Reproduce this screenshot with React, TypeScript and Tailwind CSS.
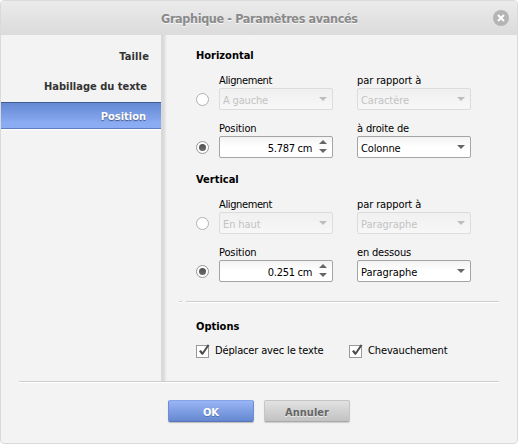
import type { ReactNode } from "react";

function Radio({ on = false }: { on?: boolean }) {
  return (
    <span className={`mt-[5px] mr-[10px] flex size-[13px] shrink-0 items-center justify-center rounded-full border bg-white ${on ? "border-[#969696]" : "border-[#b0b0b0]"}`}>
      {on && <span className="size-[7px] rounded-full bg-gradient-to-b from-[#505050] to-[#6c6c6c]" />}
    </span>
  );
}

function Select({ value, disabled = false }: { value: ReactNode; disabled?: boolean }) {
  return (
    <div
      className={`flex h-[22px] w-[114px] items-center justify-between rounded-[2px] border pl-[3px] pr-[5px] ${
        disabled ? "border-[#dcdcdc] bg-gradient-to-b from-[#f0f0f0] to-[#f7f7f7] text-[#c3c3c3]" : "border-[#a5a5a5] bg-gradient-to-b from-[#f3f3f3] to-white to-50% text-black"
      }`}
    >
      <span className="pt-[4px] leading-[16px]">{value}</span>
      <svg width="8" height="4" viewBox="0 0 8 4" className={disabled ? "fill-[#bdbdbd]" : "fill-[#666]"}>
        <path d="M0 0h8L4 4z" />
      </svg>
    </div>
  );
}

function Spinner({ value }: { value: ReactNode }) {
  return (
    <div className="flex h-[22px] w-[114px] items-center justify-end gap-[7px] rounded-[2px] border border-[#a5a5a5] bg-gradient-to-b from-[#f3f3f3] to-white to-50% pr-[5px]">
      <span className="pt-[4px] leading-[16px]">{value}</span>
      <svg width="8" height="14" viewBox="0 0 8 14" className="fill-[#666]">
        <path d="M0 4h8L4 0zM0 9h8L4 13z" />
      </svg>
    </div>
  );
}

function Row({ on, left, right, a, b }: { on?: boolean; left: ReactNode; right: ReactNode; a: ReactNode; b: ReactNode }) {
  return (
    <div className="flex h-[48px]">
      <div className="pt-[14px]">
        <Radio on={on} />
      </div>
      <div className="w-[138px]">
        <div className="h-[14px] leading-[14px]">{left}</div>
        {a}
      </div>
      <div>
        <div className="h-[14px] leading-[14px]">{right}</div>
        {b}
      </div>
    </div>
  );
}

function Check({ children }: { children: ReactNode }) {
  return (
    <div className="flex h-[15px] w-[153px] items-start gap-[5px]">
      <svg width="14" height="15" viewBox="0 0 14 15" fill="none" className="shrink-0">
        <rect x=".5" y="1.5" width="12" height="12" fill="#fff" stroke="#999" />
        <path d="M3 7.2 4.8 6 6.6 7.9 11.6.4 13.5 1.2 7 10.8H5.8z" fill="#4d4d4d" />
      </svg>
      <span className="leading-[13px]">{children}</span>
    </div>
  );
}

function T({ w = "", children }: { w?: string; children: string }) {
  return <span className={`inline-block whitespace-nowrap ${w}`}>{children}</span>;
}

const alignment = <T w="tracking-[-0.38px]">Alignement</T>;
const relativeTo = <T w="tracking-[-0.1px]">par rapport à</T>;
const position = <T w="tracking-[-0.13px]">Position</T>;
const paragraph = <T w="tracking-[-0.05px]">Paragraphe</T>;

export default function App() {
  return (
    <div className="h-[444px] w-[518px] overflow-hidden rounded-[4px] border border-[#dadada] bg-[#f3f3f3] font-['DejaVu_Sans_Condensed','DejaVu_Sans',sans-serif] text-[11px] [font-stretch:condensed] text-black">
      <header className="flex h-[34px] items-center bg-gradient-to-b from-[#ebebeb] to-[#dbdbdb] pl-[160px] pr-[8px] text-[12.5px] font-bold text-[#8a8a8a] [text-shadow:0_1px_0_#f8f8f8]">
        <span className="pt-[2px]"><T w="tracking-[-0.35px]">Graphique - Paramètres avancés</T></span>
        <svg width="16" height="16" viewBox="0 0 16 16" className="ml-auto">
          <circle cx="8" cy="8" r="8" fill="#b4b4b4" />
          <path d="m5 5 6 6m0-6-6 6" stroke="#fff" strokeWidth="2" />
        </svg>
      </header>
      <div className="flex h-[346px]">
        <nav className="flex w-[160px] flex-col text-right font-bold text-[#333]">
          <div className="h-[31px] pt-[15px] pr-[12px] leading-[14px]"><T w="tracking-[0.15px]">Taille</T></div>
          <div className="h-[36px] pt-[14px] pr-[14px] leading-[14px]"><T>Habillage du texte</T></div>
          <div className="h-[27px] border-y border-t-[#405b91] border-b-[#5f7fc2] bg-gradient-to-b from-[#6488d2] to-[#8babf3] to-80% pr-[15px] leading-[28px] text-white shadow-[0_1px_0_#fff] [text-shadow:0_1px_1px_#40557f]"><T>Position</T></div>
        </nav>
        <div className="w-[6px] bg-gradient-to-r from-[#d9d9d9] from-40% to-[#f3f3f3]" />
        <main className="flex flex-1 flex-col pl-[29px]">
          <h2 className="h-[39px] pt-[14px] font-bold leading-[14px]"><T>Horizontal</T></h2>
          <Row left={alignment} right={relativeTo} a={<Select disabled value={<T w="tracking-[-0.17px]">A gauche</T>} />} b={<Select disabled value={<T w="tracking-[-0.05px]">Caractère</T>} />} />
          <Row on left={position} right={<T w="tracking-[-0.15px]">à droite de</T>} a={<Spinner value={<T w="tracking-[-0.3px]">5.787 cm</T>} />} b={<Select value={<T w="tracking-[-0.13px]">Colonne</T>} />} />
          <h2 className="h-[28px] pt-[3px] font-bold leading-[14px]"><T>Vertical</T></h2>
          <Row left={alignment} right={relativeTo} a={<Select disabled value={<T w="tracking-[-0.1px]">En haut</T>} />} b={<Select disabled value={paragraph} />} />
          <Row on left={position} right={<T w="tracking-[-0.17px]">en dessous</T>} a={<Spinner value={<T w="tracking-[-0.3px]">0.251 cm</T>} />} b={<Select value={paragraph} />} />
          <div className="mt-[7px] -ml-[17px] flex w-[320px] gap-1">
            <div className="h-[2px] w-[3px] border-b border-white bg-[#cdcdcd]" />
            <div className="h-[2px] flex-1 border-b border-white bg-[#cdcdcd]" />
          </div>
          <h2 className="h-[41px] pt-[17px] font-bold leading-[14px]"><T>Options</T></h2>
          <div className="flex">
            <Check><T w="tracking-[-0.15px]">Déplacer avec le texte</T></Check>
            <Check><T w="tracking-[-0.13px]">Chevauchement</T></Check>
          </div>
        </main>
      </div>
      <footer className="mx-[18px] w-[480px] border-t border-[#cdcdcd] shadow-[inset_0_1px_0_#fff]">
        <div className="flex gap-[10px] pt-[18px] pl-[149px] font-bold">
          <button className="h-[22px] w-[86px] rounded-[2px] border border-[#6c8ed6] border-t-[#86a4e8] border-b-[#5876b7] bg-gradient-to-b from-[#9ab5f5] to-[#6588d1] pt-[3px] leading-[16px] text-white shadow-[0_1px_1px_#bbb] [text-shadow:0_1px_0_#5471ae]"><T>OK</T></button>
          <button className="h-[22px] w-[86px] rounded-[2px] border border-[#c5c5c5] border-b-[#aaa] bg-gradient-to-b from-[#e2e2e2] to-[#c2c2c2] pt-[3px] leading-[16px] text-[#666] shadow-[0_1px_1px_#ccc] [text-shadow:0_1px_0_#eee]"><T>Annuler</T></button>
        </div>
      </footer>
    </div>
  );
}
